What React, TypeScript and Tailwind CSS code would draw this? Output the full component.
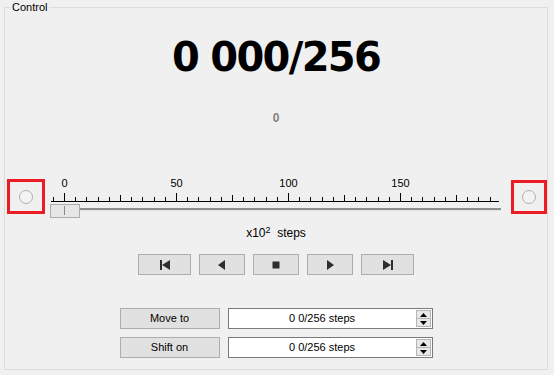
const ticks: number[] = [];
for (let v = -5; v <= 190; v += 5) ticks.push(v);

const tx = (v: number) => Math.round(19 + 2.24 * v) + 0.5;

const Scale = () => (
  <svg width={466} height={42} className="block shrink-0">
    {[0, 50, 100, 150].map((v) => (
      <text
        key={v}
        x={tx(v)}
        y={11}
        textAnchor="middle"
        fontSize={11}
        fontFamily="Liberation Sans, sans-serif"
        fill="#000"
      >
        {v}
      </text>
    ))}
    <line x1={6} y1={25.5} x2={454} y2={25.5} stroke="#000" />
    {ticks.map((v) => (
      <line
        key={v}
        x1={tx(v)}
        x2={tx(v)}
        y1={v % 50 === 0 ? 17 : v % 25 === 0 ? 19 : 21}
        y2={25}
        stroke="#000"
      />
    ))}
    <rect x={5} y={32} width={451} height={2} fill="#8e8e8e" />
    <rect x={5} y={34} width={451} height={1} fill="#e3e3e3" />
    <rect x={5.5} y={28.5} width={29} height={13} fill="#e6e6e6" stroke="#adadad" />
    <line x1={19.5} x2={19.5} y1={30} y2={39} stroke="#8a8a8a" />
  </svg>
);

const Radio = () => (
  <span className="block h-[14px] w-[14px] rounded-full border border-[#b0b0b0] bg-[#f3f3f3]" />
);

const ico = "#2e2e2e";

const First = () => (
  <svg width={12} height={10}>
    <rect x={1} y={0} width={2} height={10} fill={ico} />
    <polygon points="11,0 3,5 11,10" fill={ico} />
  </svg>
);
const Prev = () => (
  <svg width={8} height={10}>
    <polygon points="7,0 0,5 7,10" fill={ico} />
  </svg>
);
const Stop = () => (
  <svg width={8} height={8}>
    <rect x={0.5} y={0.5} width={7} height={7} fill={ico} />
  </svg>
);
const Play = () => (
  <svg width={8} height={10}>
    <polygon points="1,0 8,5 1,10" fill={ico} />
  </svg>
);
const Last = () => (
  <svg width={12} height={10}>
    <polygon points="1,0 9,5 1,10" fill={ico} />
    <rect x={9} y={0} width={2} height={10} fill={ico} />
  </svg>
);

const btn = "flex h-[21px] items-center justify-center border border-[#adadad] bg-[#e1e1e1]";

const SpinBox = ({ value }: { value: string }) => (
  <div className="flex h-[21px] w-[205px] border border-[#7a7a7a] bg-white">
    <div className="flex flex-1 items-center justify-center text-[11px] text-black">{value}</div>
    <div className="my-[1px] mr-[1px] flex w-[15px] flex-col">
      <div className="flex flex-1 items-center justify-center border border-[#b5b5b5] bg-[#e8e8e8]">
        <svg width={7} height={4}>
          <polygon points="3.5,0 7,4 0,4" fill="#000" />
        </svg>
      </div>
      <div className="flex flex-1 items-center justify-center border border-t-0 border-[#b5b5b5] bg-[#e8e8e8]">
        <svg width={7} height={4}>
          <polygon points="0,0 7,0 3.5,4" fill="#000" />
        </svg>
      </div>
    </div>
  </div>
);

export default function App() {
  return (
    <div className="h-[375px] w-[554px] overflow-hidden bg-[#f0f0f0] pt-[7px] pl-[4px] font-['Liberation_Sans',sans-serif] text-black">
      <div className="relative flex h-[363px] w-[544px] flex-col border border-[#dcdcdc]">
        <span className="absolute left-[5px] top-[-7px] bg-[#f0f0f0] px-[2px] text-[11px] leading-[13px]">
          Control
        </span>

        <div className="mt-[29px] text-center font-['DejaVu_Sans',sans-serif] text-[40px] leading-[40px] font-bold tracking-[-1.7px]">
          0 000/256
        </div>

        <div className="mt-[34px] text-center text-[12px] leading-[14px] font-bold text-[#808080]">0</div>

        <div className="mt-[51px] flex h-[42px] items-start">
          <div className="ml-[2px] mt-[3px] flex h-[35px] w-[38px] shrink-0 items-center justify-center border-[3px] border-[#ed1c24]">
            <Radio />
          </div>
          <Scale />
          <div className="mt-[4px] flex h-[34px] w-[36px] shrink-0 items-center justify-center border-[3px] border-[#ed1c24]">
            <Radio />
          </div>
        </div>

        <div className="mt-[8px] text-center text-[12px] leading-[14px]">
          x10<sup>2</sup>&nbsp;&nbsp;steps
        </div>

        <div className="mt-[14px] flex justify-center gap-[8px]">
          <button className={`${btn} w-[53px]`}>
            <First />
          </button>
          <button className={`${btn} w-[46px]`}>
            <Prev />
          </button>
          <button className={`${btn} w-[46px]`}>
            <Stop />
          </button>
          <button className={`${btn} w-[46px]`}>
            <Play />
          </button>
          <button className={`${btn} w-[53px]`}>
            <Last />
          </button>
        </div>

        <div className="mt-[33px] flex justify-center gap-[8px]">
          <button className={`${btn} w-[100px] text-[11px]`}>Move to</button>
          <SpinBox value="0 0/256 steps" />
        </div>
        <div className="mt-[8px] flex justify-center gap-[8px]">
          <button className={`${btn} w-[100px] text-[11px]`}>Shift on</button>
          <SpinBox value="0 0/256 steps" />
        </div>
      </div>
    </div>
  );
}
